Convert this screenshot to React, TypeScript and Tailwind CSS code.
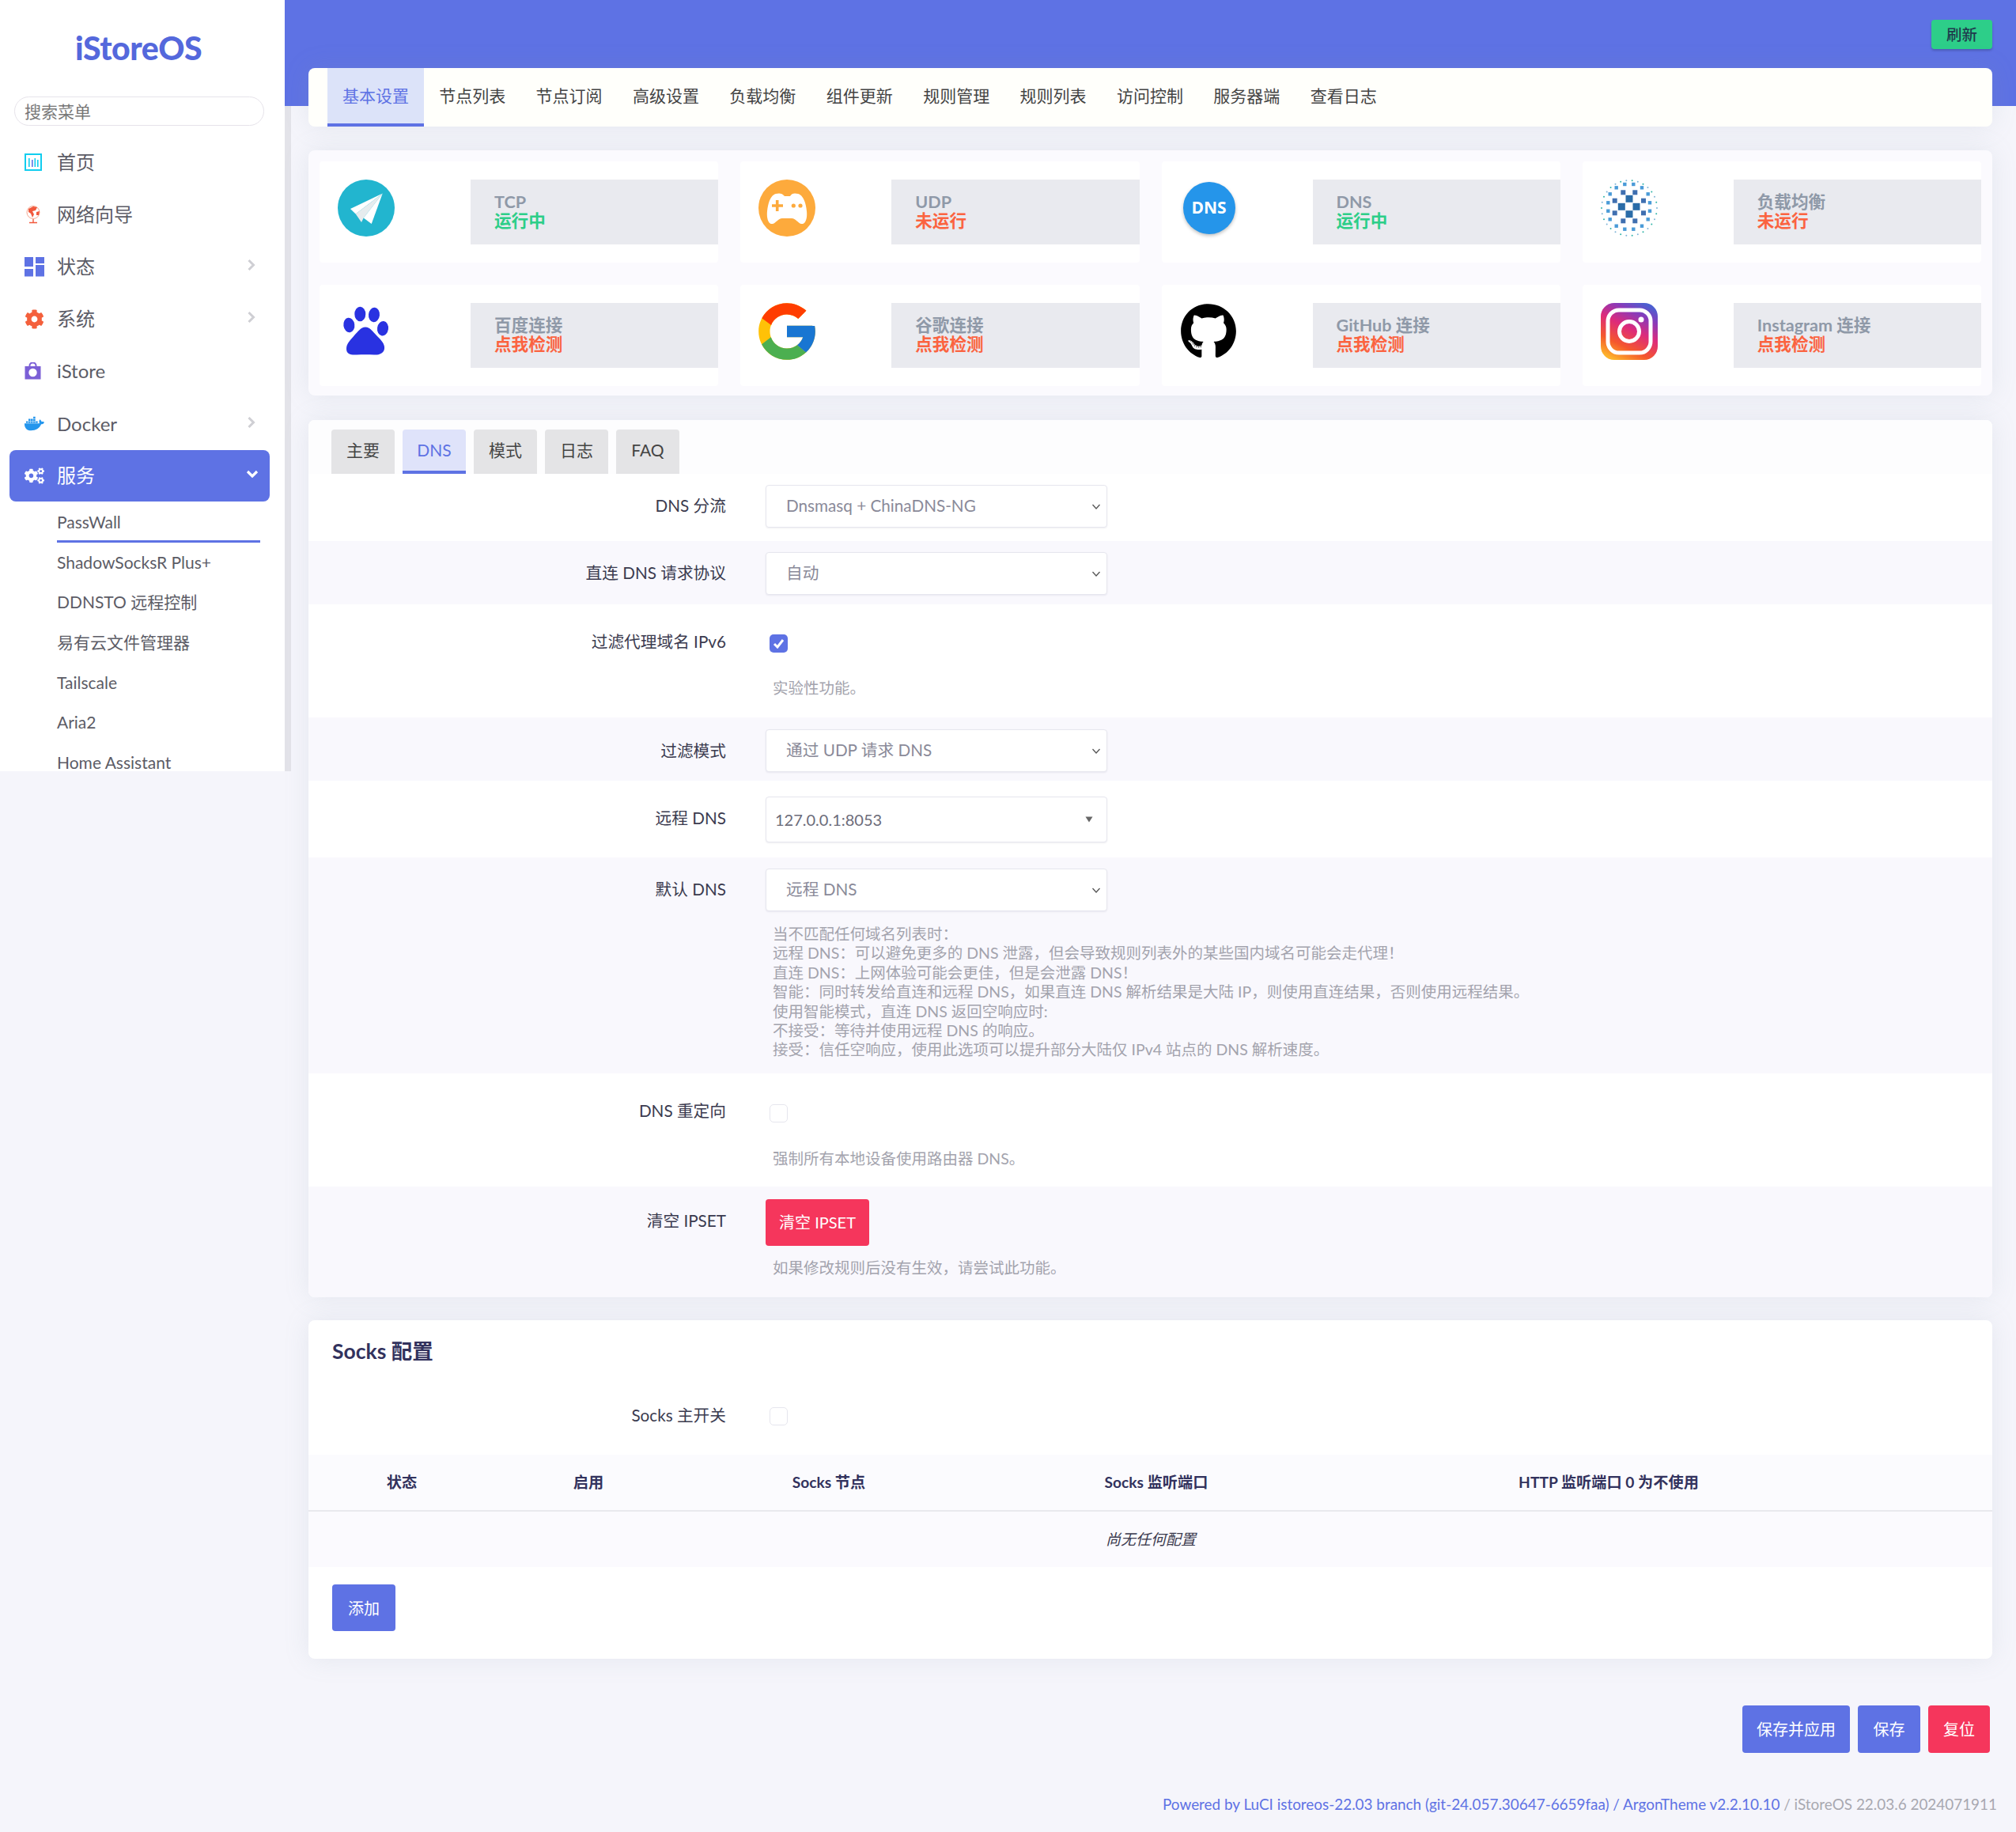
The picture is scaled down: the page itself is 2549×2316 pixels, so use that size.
import React from "react";
import { FaDocker, FaCogs, FaCog, FaGithub } from "react-icons/fa";
import { FcGoogle } from "react-icons/fc";

const FONT = "font-['Lato','Noto_Sans_CJK_SC',sans-serif]";

function HomeIcon() {
  return (
    <svg width="22" height="22" viewBox="0 0 22 22">
      <rect x="1" y="1" width="20" height="20" fill="none" stroke="#11cdef" strokeWidth="2" />
      <rect x="5" y="6" width="1.6" height="11" fill="#11cdef" />
      <rect x="9" y="8" width="1.6" height="9" fill="#5e72e4" />
      <rect x="12.5" y="6" width="1.6" height="11" fill="#11cdef" />
      <rect x="16" y="8" width="1.6" height="9" fill="#11cdef" />
    </svg>
  );
}
function GlobeIcon() {
  return (
    <svg width="22" height="24" viewBox="0 0 22 24">
      <circle cx="11" cy="9.5" r="8" fill="#fff" stroke="#f6a58c" strokeWidth="1" />
      <path d="M5 5 L11 2 L16 3 L14 7 L10 8 L12 12 L10 16 L8 11 L5 9 Z" fill="#f1583c" />
      <path d="M15 9 L19 8 L18 13 L15 13 Z" fill="#f1583c" />
      <path d="M11 18 V22 M6 22.5 H16" stroke="#f1583c" strokeWidth="1.4" />
    </svg>
  );
}
function TilesIcon() {
  return (
    <svg width="25" height="25" viewBox="0 0 25 25">
      <rect x="0" y="0" width="11" height="12" fill="#5e72e4" />
      <rect x="14" y="0" width="11" height="8" fill="#5e72e4" />
      <rect x="0" y="15" width="11" height="9.5" fill="#5e72e4" />
      <rect x="14" y="10" width="11" height="14.5" fill="#5e72e4" />
    </svg>
  );
}
function BagIcon() {
  return (
    <svg width="21" height="22" viewBox="0 0 21 22">
      <path d="M6.5 6 V4 a4 3.5 0 0 1 8 0 V6" fill="none" stroke="#7b5fd6" strokeWidth="2" />
      <rect x="0.5" y="5" width="20" height="16.5" fill="#7b5fd6" />
      <circle cx="10.5" cy="13" r="5.2" fill="#fff" />
    </svg>
  );
}
function PlaneIcon() {
  return (
    <svg width="72" height="72" viewBox="0 0 72 72">
      <circle cx="36" cy="36" r="36" fill="#22b5cf" />
      <path d="M56.7 17.6 L16 37 L22.7 43.6 Z" fill="#fff" />
      <path d="M56.7 17.6 L22.7 43.6 L30 54 L32.7 48.6 Z" fill="#e6ecee" />
      <path d="M56.7 17.6 L32.7 48.6 L42.7 56 Z" fill="#fff" />
    </svg>
  );
}
function GameIcon() {
  return (
    <svg width="72" height="72" viewBox="0 0 72 72">
      <circle cx="36" cy="36" r="36" fill="#fdaa3c" />
      <path d="M22 18 C26 17 30 17 33 21 H40 C42 17 46 17 50 18 C57 20 60 30 61 40 C62 50 59 57 54 56 C50 55 47 49 42 49 H30 C25 49 22 55 18 56 C13 57 10 50 11 40 C12 30 15 20 22 18 Z" fill="#fff" />
      <path d="M23.7 26 V40 M17 33 H31" stroke="#fdaa3c" strokeWidth="3.6" />
      <circle cx="44.3" cy="33" r="2.6" fill="#fdaa3c" />
      <circle cx="53" cy="33" r="2.6" fill="#fdaa3c" />
    </svg>
  );
}
function PawIcon() {
  return (
    <svg width="72" height="72" viewBox="0 0 72 72">
      <g fill="#2932e1">
        <ellipse cx="14.3" cy="28" rx="7" ry="9.3" transform="rotate(-8 14.3 28)" />
        <ellipse cx="28.3" cy="14" rx="7" ry="9.3" />
        <ellipse cx="46" cy="15" rx="7" ry="9.3" transform="rotate(6 46 15)" />
        <ellipse cx="57" cy="32.3" rx="7" ry="9.3" transform="rotate(8 57 32.3)" />
        <path d="M35 30.5 C41 30.5 44 36 49 41 C55 47 60 52 59 58 C58 64 52 66 46 65.5 C39 65 31 65 24 65.5 C17 66 11 65 11 58 C11 51 16 47 21 41 C26 36 29 30.5 35 30.5 Z" />
      </g>
    </svg>
  );
}
function DnsIcon() {
  return (
    <div className="w-[66px] h-[66px] mt-[3px] ml-[4px] rounded-full bg-[#2595ea] shadow-[0_2px_4px_rgba(0,0,0,0.25)] flex items-center justify-center text-white font-bold text-[21px] font-['Open_Sans',sans-serif]">
      DNS
    </div>
  );
}
function BalanceIcon() {
  const dots: React.ReactNode[] = [];
  for (let i = 0; i < 30; i++) {
    const a = (i / 30) * Math.PI * 2;
    dots.push(<circle key={i} cx={36 + Math.cos(a) * 35} cy={36 + Math.sin(a) * 35} r={1} fill={i % 2 ? "#2fb3a8" : "#7fb4d6"} />);
  }
  const big = [[36, 24.3], [36, 43.7], [26.3, 34.3], [45, 34.3]];
  const mid = [[28.3, 16.3], [43.3, 16.3], [28.3, 52.3], [43.3, 52.3], [17.7, 26.7], [54, 26.7], [17.7, 42.3], [54, 42.3]];
  const small = [
    [30.3, 6], [41.3, 6], [19.7, 10.3], [52, 10.3], [11.7, 18.3], [59.7, 18.3], [9.3, 29.3], [62, 29.3],
    [9.3, 39.7], [62, 39.7], [11.7, 50.3], [59.7, 50.3], [19.7, 58.7], [52, 58.7], [30.3, 62.7], [41.3, 62.7],
  ];
  return (
    <svg width="72" height="72" viewBox="0 0 72 72">
      {dots}
      {small.map(([x, y], i) => (
        <rect key={`s${i}`} x={x - 2.2} y={y - 2.2} width={4.4} height={4.4} fill="#4a9bd8" />
      ))}
      {mid.map(([x, y], i) => (
        <rect key={`m${i}`} x={x - 3} y={y - 3} width={6} height={6} fill="#3f6fb0" />
      ))}
      {big.map(([x, y], i) => (
        <rect key={`b${i}`} x={x - 4.5} y={y - 4.5} width={9} height={9} fill="#2a6ca8" />
      ))}
    </svg>
  );
}
function InstaIcon() {
  return (
    <svg width="72" height="72" viewBox="0 0 72 72">
      <defs>
        <linearGradient id="ig" x1="0.25" y1="1" x2="0.75" y2="0">
          <stop offset="0" stopColor="#fdb32b" />
          <stop offset="0.25" stopColor="#f5582c" />
          <stop offset="0.55" stopColor="#dd2a7b" />
          <stop offset="0.8" stopColor="#8a3ab9" />
          <stop offset="1" stopColor="#4c5fd0" />
        </linearGradient>
      </defs>
      <rect x="0" y="0" width="72" height="72" rx="17" fill="url(#ig)" />
      <rect x="9" y="9" width="54" height="54" rx="14" fill="none" stroke="#fff" strokeWidth="5" />
      <circle cx="36" cy="36" r="12.5" fill="none" stroke="#fff" strokeWidth="5" />
      <circle cx="51" cy="21" r="3.5" fill="#fff" />
    </svg>
  );
}

function Chevron({ className = "" }: { className?: string }) {
  return (
    <svg width="11" height="16" viewBox="0 0 11 16" className={className}>
      <path d="M2.5 2 L8.5 8 L2.5 14" fill="none" stroke="#cfcfd4" strokeWidth="3" />
    </svg>
  );
}

function MenuItem({ icon, label, arrow }: { icon: React.ReactNode; label: string; arrow?: boolean }) {
  return (
    <div className="h-[66.1px] flex items-center text-[24px] text-[#5c5c66]">
      <div className="w-[72px] pl-[31px] flex items-center">{icon}</div>
      <span className="flex-1">{label}</span>
      {arrow && <Chevron className="mr-[37px] -mt-[4px]" />}
    </div>
  );
}

const subs = ["ShadowSocksR Plus+", "DDNSTO 远程控制", "易有云文件管理器", "Tailscale", "Aria2", "Home Assistant"];

function Sidebar() {
  return (
    <aside className="w-[360px] h-[975px] bg-white overflow-hidden shrink-0 shadow-[8px_0_0_0_#e3e3e9]">
      <div className="h-[122px] pt-[36px] pl-[95px] text-[#5468dc] text-[41px] font-black font-['Lato',sans-serif] leading-[50px] tracking-[-0.5px]">
        iStoreOS
      </div>
      <div className="ml-[18px] w-[316px] h-[37px] rounded-full border border-[#e6e3ea] pl-[12px] flex items-center text-[21px] text-[#777]">
        搜索菜单
      </div>
      <div className="pt-[13px]">
        <MenuItem icon={<HomeIcon />} label="首页" />
        <MenuItem icon={<GlobeIcon />} label="网络向导" />
        <MenuItem icon={<TilesIcon />} label="状态" arrow />
        <MenuItem icon={<FaCog size={25} color="#f4603c" />} label="系统" arrow />
        <MenuItem icon={<BagIcon />} label="iStore" />
        <MenuItem icon={<FaDocker size={25} color="#2496ed" />} label="Docker" arrow />
      </div>
      <div className="mx-[12px] w-[329px] h-[65px] rounded-[8px] bg-[#5e72e4] text-white flex items-center text-[24px]">
        <div className="w-[60px] pl-[19px]">
          <FaCogs size={25} color="#fff" />
        </div>
        <span className="flex-1">服务</span>
        <svg width="16" height="12" viewBox="0 0 16 12" className="mr-[14px] -mt-[4px]">
          <path d="M2 3 L8 9 L14 3" fill="none" stroke="#fff" strokeWidth="3.2" />
        </svg>
      </div>
      <div className="pl-[72px] pr-[31px] text-[21px] text-[#5c5c66]">
        <div className="h-[52px] pt-[11px] leading-[30px] border-b-[3px] border-[#5e72e4]">PassWall</div>
        <div className="pt-[15px] flex flex-col gap-[30.7px]">
          {subs.map((s) => (
            <div key={s} className="h-[20px] leading-[20px]">
              {s}
            </div>
          ))}
        </div>
      </div>
    </aside>
  );
}

const topTabs = ["节点列表", "节点订阅", "高级设置", "负载均衡", "组件更新", "规则管理", "规则列表", "访问控制", "服务器端", "查看日志"];

function StatusItem({ icon, name, status, color }: { icon: React.ReactNode; name: string; status: string; color: string }) {
  return (
    <div className="h-[128px] bg-white rounded-[4px] flex pt-[23px]">
      <div className="w-[191px] pl-[23px] shrink-0">{icon}</div>
      <div className="flex-1 h-[82px] bg-[#e9eaef] pl-[30px] pt-[16px] text-[21.6px] leading-[24px] font-bold">
        <div className="text-[#8f99a8]">{name}</div>
        <div className={color}>{status}</div>
      </div>
    </div>
  );
}

function Select({ text, className = "" }: { text: string; className?: string }) {
  return (
    <div className={`w-[432px] h-[54px] bg-white rounded-[4px] border border-[#e6e6ee] shadow-[0_1px_2px_rgba(50,50,93,0.08)] pl-[25px] pr-[7px] flex items-center justify-between text-[20.7px] text-[#8a8a99] ${className}`}>
      <span className="-mt-[1px]">{text}</span>
      <svg width="12" height="9" viewBox="0 0 12 9">
        <path d="M1.5 2 L6 7 L10.5 2" fill="none" stroke="#555" strokeWidth="1.3" />
      </svg>
    </div>
  );
}

function Check({ on, className = "" }: { on?: boolean; className?: string }) {
  return (
    <div className={`ml-[5px] w-[23px] h-[23px] rounded-[5px] flex items-center justify-center ${on ? "bg-[#5e72e4]" : "bg-white border border-[#e6e6ee]"} ${className}`}>
      {on && (
        <svg width="15" height="13" viewBox="0 0 15 13">
          <path d="M2 7 L6 11 L13 2" fill="none" stroke="#fff" strokeWidth="3" />
        </svg>
      )}
    </div>
  );
}

function Help({ children, className = "" }: { children: React.ReactNode; className?: string }) {
  return <div className={`ml-[9px] text-[19.5px] leading-[24.4px] text-[#a3a3ad] whitespace-nowrap ${className}`}>{children}</div>;
}

function Row({ label, h, lp, tint, cp, children }: { label: string; h: string; lp: string; tint?: boolean; cp: string; children: React.ReactNode }) {
  return (
    <div className={`flex ${h} ${tint ? "bg-[#f9f8fd]" : "bg-white"}`}>
      <div className={`w-[528px] shrink-0 text-right text-[20.7px] leading-[28px] text-[#3b3b4f] ${lp}`}>{label}</div>
      <div className={`ml-[50px] ${cp}`}>{children}</div>
    </div>
  );
}

const dnsHelp = [
  "当不匹配任何域名列表时：",
  "远程 DNS：可以避免更多的 DNS 泄露，但会导致规则列表外的某些国内域名可能会走代理！",
  "直连 DNS：上网体验可能会更佳，但是会泄露 DNS！",
  "智能：同时转发给直连和远程 DNS，如果直连 DNS 解析结果是大陆 IP，则使用直连结果，否则使用远程结果。",
  "使用智能模式，直连 DNS 返回空响应时:",
  "不接受：等待并使用远程 DNS 的响应。",
  "接受：信任空响应，使用此选项可以提升部分大陆仅 IPv4 站点的 DNS 解析速度。",
];

const cardShadow = "shadow-[0_0_32px_0_rgba(136,152,170,0.15)]";

function Main() {
  return (
    <main className="flex-1 min-w-0 flex flex-col">
      <header className="h-[134px] shrink-0 bg-[#5e72e4] pt-[25px] pr-[30px] flex justify-end items-start">
        <div className="w-[77px] h-[37px] rounded-[4px] bg-[#2dce89] shadow-[0_2px_3px_rgba(0,0,0,0.2)] flex items-center justify-center text-[19.5px] text-[#1f3a4d] font-medium">
          刷新
        </div>
      </header>
      <div className="px-[30px] -mt-[48px] flex flex-col">
        <nav className={`h-[74px] shrink-0 rounded-[8px] bg-[#fffffb] pl-[24px] flex text-[21px] text-[#444] ${cardShadow}`}>
          <div className="w-[122px] h-full pb-[1px] bg-[#dce3f9] border-b-4 border-[#5e72e4] text-[#5e72e4] flex items-center justify-center">基本设置</div>
          {topTabs.map((t) => (
            <div key={t} className="w-[122.4px] h-full pb-[5px] flex items-center justify-center">
              {t}
            </div>
          ))}
        </nav>

        <section className={`mt-[30px] h-[310px] rounded-[8px] bg-[#fbfafe] p-[14px] grid grid-cols-4 gap-[28px] ${cardShadow}`}>
          <StatusItem icon={<PlaneIcon />} name="TCP" status="运行中" color="text-[#2dce89]" />
          <StatusItem icon={<GameIcon />} name="UDP" status="未运行" color="text-[#fb6340]" />
          <StatusItem icon={<DnsIcon />} name="DNS" status="运行中" color="text-[#2dce89]" />
          <StatusItem icon={<BalanceIcon />} name="负载均衡" status="未运行" color="text-[#fb6340]" />
          <StatusItem icon={<PawIcon />} name="百度连接" status="点我检测" color="text-[#fb6340]" />
          <StatusItem icon={<FcGoogle size={86} className="-mt-[7px] -ml-[7px]" />} name="谷歌连接" status="点我检测" color="text-[#fb6340]" />
          <StatusItem icon={<FaGithub size={72} color="#000" />} name="GitHub 连接" status="点我检测" color="text-[#fb6340]" />
          <StatusItem icon={<InstaIcon />} name="Instagram 连接" status="点我检测" color="text-[#fb6340]" />
        </section>

        <section className={`mt-[31px] rounded-[8px] bg-white overflow-hidden ${cardShadow}`}>
          <div className="h-[68px] pt-[12px] pl-[29px] flex gap-[10px] text-[21px] text-[#444] bg-[#fdfdfe]">
            <div className="w-[80px] h-[56px] pb-[5px] rounded-t-[4px] bg-[#e4e4e6] flex items-center justify-center">主要</div>
            <div className="w-[80px] h-[56px] rounded-t-[4px] bg-[#dfe3fa] border-b-4 border-[#5e72e4] text-[#5e72e4] flex items-center justify-center">DNS</div>
            <div className="w-[80px] h-[56px] pb-[5px] rounded-t-[4px] bg-[#e4e4e6] flex items-center justify-center">模式</div>
            <div className="w-[80px] h-[56px] pb-[5px] rounded-t-[4px] bg-[#e4e4e6] flex items-center justify-center">日志</div>
            <div className="w-[80px] h-[56px] pb-[5px] rounded-t-[4px] bg-[#e4e4e6] flex items-center justify-center">FAQ</div>
          </div>

          <Row label="DNS 分流" h="h-[85px]" lp="pt-[26px]" cp="pt-[14px]">
            <Select text="Dnsmasq + ChinaDNS-NG" />
          </Row>
          <Row label="直连 DNS 请求协议" h="h-[80px]" lp="pt-[26px]" cp="pt-[14px]" tint>
            <Select text="自动" />
          </Row>
          <Row label="过滤代理域名 IPv6" h="h-[143px]" lp="pt-[33px]" cp="pt-[38px]">
            <Check on />
            <Help className="mt-[33px]">实验性功能。</Help>
          </Row>
          <Row label="过滤模式" h="h-[80px]" lp="pt-[28px]" cp="pt-[15px]" tint>
            <Select text="通过 UDP 请求 DNS" />
          </Row>
          <Row label="远程 DNS" h="h-[97px]" lp="pt-[33px]" cp="pt-[20px]">
            <div className="w-[432px] h-[58px] bg-white rounded-[4px] border border-[#e6e6ee] shadow-[0_1px_2px_rgba(50,50,93,0.08)] pl-[11px] pr-[17px] flex items-center justify-between text-[20px] text-[#6c6c7a]">
              <span>127.0.0.1:8053</span>
              <svg width="10" height="8" viewBox="0 0 10 8">
                <path d="M0.5 0.5 H9.5 L5 7.5 Z" fill="#666" />
              </svg>
            </div>
          </Row>
          <Row label="默认 DNS" h="h-[273px]" lp="pt-[26px]" cp="pt-[14px]" tint>
            <Select text="远程 DNS" />
            <Help className="mt-[17px]">
              {dnsHelp.map((l) => (
                <div key={l}>{l}</div>
              ))}
            </Help>
          </Row>
          <Row label="DNS 重定向" h="h-[143px]" lp="pt-[33px]" cp="pt-[39px]">
            <Check />
            <Help className="mt-[34px]">强制所有本地设备使用路由器 DNS。</Help>
          </Row>
          <Row label="清空 IPSET" h="h-[140px]" lp="pt-[29px]" cp="pt-[16px]" tint>
            <div className="w-[131px] h-[59px] pb-[1px] rounded-[4px] bg-[#f5365c] text-white text-[20px] flex items-center justify-center">清空 IPSET</div>
            <Help className="mt-[16px]">如果修改规则后没有生效，请尝试此功能。</Help>
          </Row>
        </section>

        <section className={`mt-[29px] h-[428px] rounded-[8px] bg-white overflow-hidden ${cardShadow}`}>
          <h3 className="pt-[21px] pl-[30px] text-[26.5px] leading-[36px] font-bold text-[#32325d]">Socks 配置</h3>
          <div className="flex h-[113px] pt-[27px]">
            <div className="w-[528px] text-right text-[20.7px] leading-[28px] text-[#3b3b4f] pt-[22px]">Socks 主开关</div>
            <div className="ml-[50px] pt-[26px]">
              <Check />
            </div>
          </div>
          <div className="h-[72px] grid grid-cols-[236px_236px_372px_456px_688px_141px] items-center bg-[#fbfbfe] border-b-2 border-[#e9e9ee] text-[19.2px] font-bold text-[#32325d] text-center">
            <div>状态</div>
            <div>启用</div>
            <div>Socks 节点</div>
            <div>Socks 监听端口</div>
            <div>HTTP 监听端口 0 为不使用</div>
            <div />
          </div>
          <div className="h-[70px] bg-[#fbfafe] pl-[1008px] flex items-center text-[19px] italic text-[#3b3b4f]">尚无任何配置</div>
          <div className="pt-[22px] pl-[30px]">
            <div className="w-[80px] h-[59px] rounded-[4px] bg-[#5e72e4] text-white text-[20px] flex items-center justify-center">添加</div>
          </div>
        </section>

        <div className="mt-[59px] pr-[3px] flex justify-end gap-[10px] text-white text-[20px]">
          <div className="w-[136px] h-[60px] rounded-[4px] bg-[#5e72e4] flex items-center justify-center">保存并应用</div>
          <div className="w-[79px] h-[60px] rounded-[4px] bg-[#5e72e4] flex items-center justify-center">保存</div>
          <div className="w-[78px] h-[60px] rounded-[4px] bg-[#f5365c] flex items-center justify-center">复位</div>
        </div>
      </div>
      <footer className="mt-[51px] pr-[24px] text-right text-[18.9px] leading-[28px] text-[#5e72e4] whitespace-nowrap">
        Powered by LuCI istoreos-22.03 branch (git-24.057.30647-6659faa) / ArgonTheme v2.2.10.10 <span className="text-[#a8a8b0]">/ iStoreOS 22.03.6 2024071911</span>
      </footer>
    </main>
  );
}

export default function App() {
  return (
    <div className={`w-[2549px] h-[2316px] overflow-hidden bg-[#f5f5fb] flex items-start ${FONT}`}>
      <Sidebar />
      <Main />
    </div>
  );
}
